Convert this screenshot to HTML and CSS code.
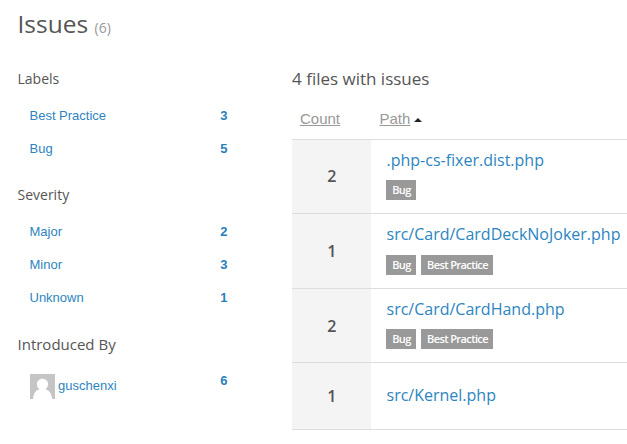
FILE: index.html
```html
<!DOCTYPE html>
<html lang="en">
<head>
<meta charset="utf-8">
<title>Issues</title>
<link rel="stylesheet" href="styles.css">
</head>
<body>
<h1>Issues <small>(6)</small></h1>
<div class="columns">
  <aside class="filters">
    <section>
      <h2>Labels</h2>
      <ul>
        <li><a href="#">Best Practice</a><b>3</b></li>
        <li><a href="#">Bug</a><b>5</b></li>
      </ul>
    </section>
    <section>
      <h2>Severity</h2>
      <ul>
        <li><a href="#">Major</a><b>2</b></li>
        <li><a href="#">Minor</a><b>3</b></li>
        <li><a href="#">Unknown</a><b>1</b></li>
      </ul>
    </section>
    <section>
      <h2 class="wide">Introduced By</h2>
      <ul>
        <li class="author">
          <a href="#"><svg class="avatar" viewBox="0 0 25 25" aria-hidden="true"><path fill="#c5c5c5" d="M0 0h25v25H0z"/><path fill="#fff" d="M12.5 4.700c3.200 0 5.600 2.300 5.600 5.400 0 2.100-.9 3.800-2.300 4.800v.7c3.700.7 5.700 4.400 6.300 9.400H3c.6-5 2.500-8.700 6.200-9.400v-.7c-1.400-1-2.300-2.700-2.300-4.800 0-3.100 2.400-5.400 5.600-5.400z"/></svg>guschenxi</a><b>6</b>
        </li>
      </ul>
    </section>
  </aside>
  <main>
    <h2>4 files with issues</h2>
    <div class="head"><a href="#">Count</a><span><a href="#">Path</a><i class="sort"></i></span></div>
    <div class="row">
      <strong>2</strong>
      <div class="file"><a href="#">.php-cs-fixer.dist.php</a><div class="tags"><span class="bug">Bug</span></div></div>
    </div>
    <div class="row">
      <strong>1</strong>
      <div class="file"><a href="#">src/Card/CardDeckNoJoker.php</a><div class="tags"><span class="bug">Bug</span><span class="practice">Best Practice</span></div></div>
    </div>
    <div class="row">
      <strong>2</strong>
      <div class="file"><a href="#">src/Card/CardHand.php</a><div class="tags"><span class="bug">Bug</span><span class="practice">Best Practice</span></div></div>
    </div>
    <div class="row short">
      <strong>1</strong>
      <div class="file"><a href="#">src/Kernel.php</a></div>
    </div>
  </main>
</div>
</body>
</html>
```
FILE: styles.css
```css
* { box-sizing: border-box; }
body {
  margin: 0;
  height: 444px;
  overflow: hidden;
  background: #fff;
  color: #555;
  font: 13px/20px "Liberation Sans", Arial, sans-serif;
}
a { color: #2d85c0; text-decoration: none; }
h1, h2 { margin: 0; font-family: "Open Sans", sans-serif; font-weight: 400; }
h1 { padding: 7px 0 0 17.5px; height: 69px; font-size: 24.5px; line-height: 34px; }
h1 small { color: #999; font-size: 14px; }
.columns { display: flex; }
.filters { flex: none; width: 292px; padding-left: 17.5px; }
.filters section { margin-bottom: 20px; }
.filters h2 { font-size: 14px; line-height: 20px; }
.filters h2.wide { margin-top: 20px; font-size: 15px; }
ul { list-style: none; margin: 10px 0 0; padding: 0 64.5px 0 12px; }
li { display: flex; justify-content: space-between; height: 33px; padding-top: 7px; }
li b { color: #2980b9; }
.author a { display: flex; gap: 3.5px; height: 25px; margin-top: 3px; line-height: 24px; }
.avatar { width: 25px; height: 25px; }
main { flex: none; width: 335px; }
main h2 { height: 35px; font-size: 17px; line-height: 20px; }
.head {
  display: flex;
  height: 35px;
  padding: 5px 0 0 8px;
  font-size: 15px;
  line-height: 20px;
}
.head > a { width: 79.5px; }
.head a { color: #999; text-decoration: underline; }
.sort {
  display: inline-block;
  margin-left: 3.5px;
  vertical-align: 2px;
  border: solid transparent;
  border-width: 0 4px 4px;
  border-bottom-color: #222;
}
.row { display: flex; height: 74.3px; border-top: 1px solid #ddd; }
.row strong {
  width: 79px;
  padding: .4px 0 0 .5px;
  background: #f4f4f4;
  font: 600 16px/72px "Open Sans", sans-serif;
  text-align: center;
}
.row:nth-of-type(4) strong { padding-top: 1px; }
.file { padding: 9px 0 0 15.5px; font: 16px/22px "Open Sans", sans-serif; }
.tags { display: flex; gap: 5px; margin: 9.3px 0 0 -.5px; }
.tags span {
  height: 20px;
  padding-left: 1px;
  background: #999;
  color: #fff;
  font-size: 11px;
  font-weight: 600;
  letter-spacing: -.6px;
  line-height: 20px;
  text-align: center;
}
.bug { width: 30px; }
.practice { width: 72px; }
.short { height: 68px; border-bottom: 1px solid #ddd; }
.short strong { line-height: 66px; }
.short .file { padding-top: 21px; }
```
